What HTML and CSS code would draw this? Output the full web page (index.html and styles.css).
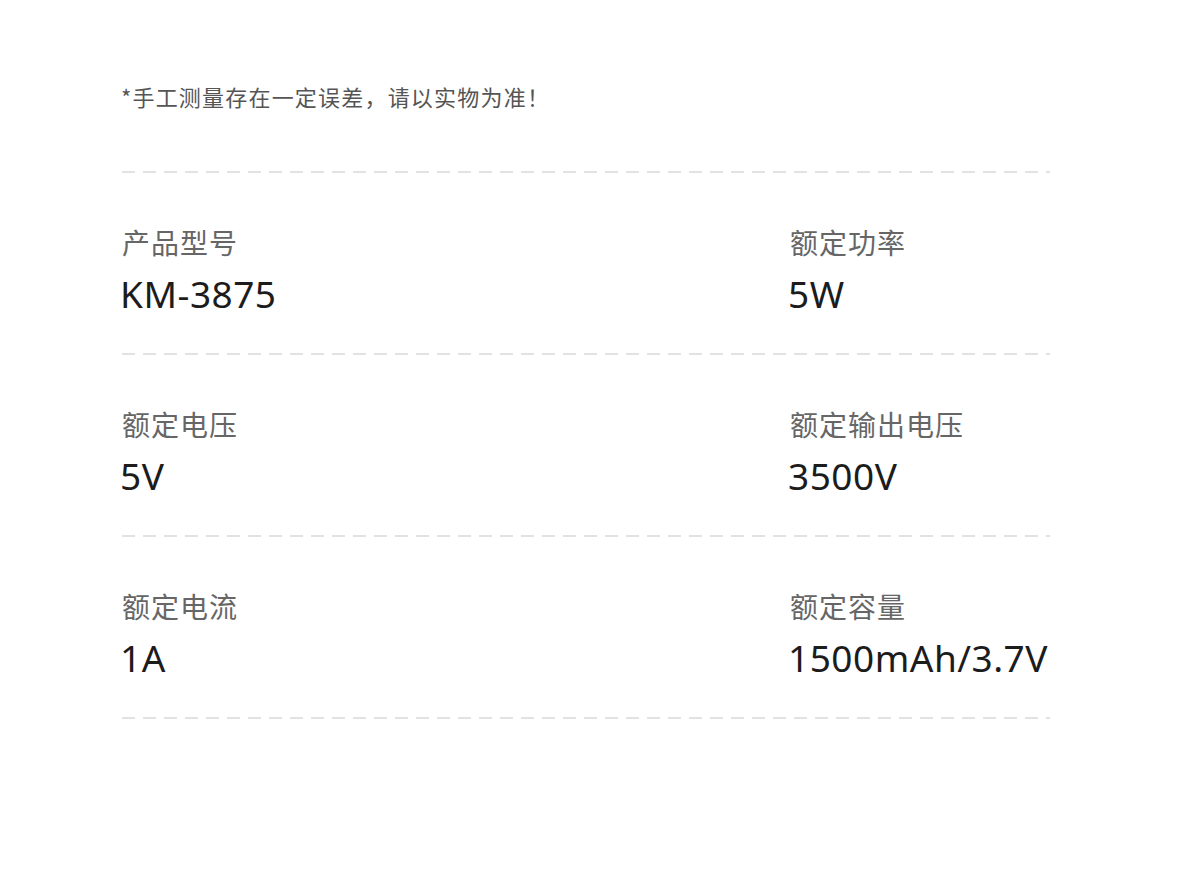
FILE: index.html
```html
<!DOCTYPE html>
<html lang="zh-CN">
<head>
<meta charset="utf-8">
<link rel="stylesheet" href="styles.css">
</head>
<body>
<div class="page">
  <p class="note">*手工测量存在一定误差，请以实物为准！</p>
  <div class="divider"></div>
  <div class="row">
    <div class="cell"><div class="label">产品型号</div><div class="value">KM-3875</div></div>
    <div class="cell"><div class="label">额定功率</div><div class="value">5W</div></div>
  </div>
  <div class="divider"></div>
  <div class="row">
    <div class="cell"><div class="label">额定电压</div><div class="value">5V</div></div>
    <div class="cell"><div class="label">额定输出电压</div><div class="value">3500V</div></div>
  </div>
  <div class="divider"></div>
  <div class="row">
    <div class="cell"><div class="label">额定电流</div><div class="value">1A</div></div>
    <div class="cell"><div class="label">额定容量</div><div class="value">1500mAh/3.7V</div></div>
  </div>
  <div class="divider"></div>
</div>
</body>
</html>
```

FILE: styles.css
```css
html, body {
  margin: 0;
  padding: 0;
  background: #ffffff;
}
body {
  font-family: "Noto Sans", "Noto Sans CJK SC", sans-serif;
}
.page {
  width: 928px;
  margin-left: 122px;
  padding-top: 81px;
}
.note {
  margin: 0 0 60px -1px;
  font-size: 22px;
  line-height: 30px;
  letter-spacing: 1.2px;
  color: #555555;
  font-family: "Noto Sans CJK SC", sans-serif;
}
.divider {
  height: 2px;
  background: repeating-linear-gradient(to right, #e2e2e2 0 13px, transparent 13px 21px);
}
.row {
  display: grid;
  grid-template-columns: 668px 1fr;
  height: 180px;
  box-sizing: border-box;
  padding-top: 51px;
}
.label {
  font-family: "Noto Sans CJK SC", sans-serif;
  font-size: 28px;
  line-height: 36px;
  color: #666666;
  letter-spacing: 1px;
}
.value {
  margin-top: 12px;
  font-size: 37px;
  line-height: 44px;
  letter-spacing: 0.5px;
  color: #1c1c1c;
  margin-left: -2px;
}
```
